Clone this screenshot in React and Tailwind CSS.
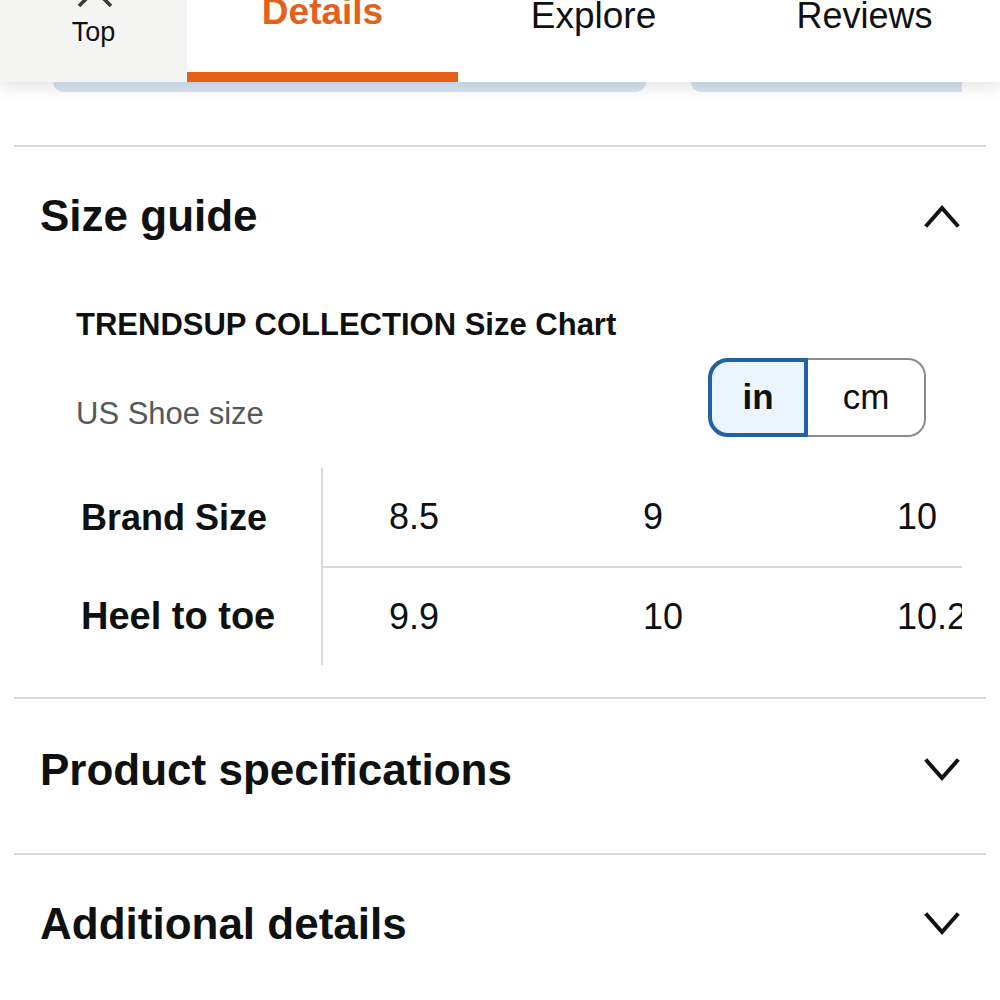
import React from "react";

const Chevron = ({ up }) => (
  <svg width="36" height="26" viewBox="0 0 36 26" fill="none">
    {up ? (
      <polyline points="3,22 18,5 33,22" stroke="#0f1111" strokeWidth="4" strokeLinecap="square" strokeLinejoin="miter" />
    ) : (
      <polyline points="3,4 18,21 33,4" stroke="#0f1111" strokeWidth="4" strokeLinecap="square" strokeLinejoin="miter" />
    )}
  </svg>
);

const Divider = () => <div className="h-[2px] bg-[#d9d9d9]" />;

const SectionHeader = ({ title, up }) => (
  <div className="flex items-center justify-between pl-[26px] pr-[26px]">
    <h2 className="text-[44px] leading-[44px] font-bold text-[#0f1111]">{title}</h2>
    <Chevron up={up} />
  </div>
);

export default function App() {
  const cols = [
    ["8.5", "9.9"],
    ["9", "10"],
    ["10", "10.2"],
  ];
  return (
    <div
      className="w-[1000px] h-[1000px] overflow-hidden bg-white text-[#0f1111]"
      style={{ fontFamily: '"Liberation Sans", Arial, sans-serif' }}
    >
      {/* Tab bar */}
      <div className="relative z-10 flex h-[82px] bg-white shadow-[0_6px_14px_rgba(0,0,0,0.10)]">
        <div className="flex w-[187px] flex-col items-center bg-[#f4f5f3]">
          <svg className="-mt-[14px] ml-[2px]" width="40" height="22" viewBox="0 0 40 22" fill="none">
            <polyline points="4,20 20,4 36,20" stroke="#3a3a3a" strokeWidth="3.6" />
          </svg>
          <span className="mt-[11px] text-[27px] leading-[27px] text-[#0f1111]">Top</span>
        </div>
        <div className="relative flex w-[271px] justify-center">
          <span className="-mt-[7px] text-[37px] leading-[37px] font-bold text-[#e4611b]">Details</span>
          <div className="absolute bottom-0 left-0 right-0 h-[10px] bg-[#e4611b]" />
        </div>
        <div className="flex w-[271px] justify-center">
          <span className="-mt-[2px] text-[37px] leading-[36px] text-[#0f1111]">Explore</span>
        </div>
        <div className="flex w-[271px] justify-center">
          <span className="-mt-[2px] text-[36px] leading-[36px] text-[#0f1111]">Reviews</span>
        </div>
      </div>

      {/* partially visible content under the bar */}
      <div className="flex h-[10px]">
        <div className="ml-[53px] w-[593px] rounded-b-[22px] bg-[#d7e5f1]" />
        <div className="ml-[45px] w-[271px] rounded-bl-[22px] bg-[#d7e5f1]" />
      </div>

      <div className="px-[14px] pt-[53px]">
        <Divider />

        {/* Size guide */}
        <div className="pt-[47px]">
          <SectionHeader title="Size guide" up />
        </div>

        <div className="pl-[62px] pr-[60px]">
          <div className="mt-[69px] text-[31px] leading-[36px] font-bold">TRENDSUP COLLECTION Size Chart</div>
          <div className="mt-[15px] flex items-start justify-between">
            <div className="mt-[38px] text-[31px] leading-[36px] text-[#565959]">US Shoe size</div>
            <div className="flex h-[79px]">
              <div className="flex w-[100px] items-center justify-center rounded-l-[20px] border-[4px] border-[#2162a5] bg-[#eaf5fd] text-[35px] font-bold">
                in
              </div>
              <div className="flex w-[118px] items-center justify-center rounded-r-[18px] border-2 border-l-0 border-[#8c8c8c] text-[35px]">
                cm
              </div>
            </div>
          </div>
        </div>

        {/* table */}
        <div className="mt-[31px] ml-[53px] mr-[24px] flex overflow-hidden">
          <div className="flex w-[256px] shrink-0 flex-col border-r-2 border-[#d9d9d9]">
            <div className="flex h-[100px] items-center pl-[14px] text-[36px] font-bold">Brand Size</div>
            <div className="flex h-[97px] items-center pl-[14px] text-[38px] font-bold">Heel to toe</div>
          </div>
          <div className="flex flex-1 flex-col">
            <div className="flex h-[100px] border-b-2 border-[#d9d9d9]">
              {cols.map((c, i) => (
                <div key={i} className="flex w-[254px] shrink-0 items-center pl-[66px] text-[36px]">
                  {c[0]}
                </div>
              ))}
            </div>
            <div className="flex h-[97px]">
              {cols.map((c, i) => (
                <div key={i} className="flex w-[254px] shrink-0 items-center pl-[66px] text-[36px] whitespace-nowrap">
                  {c[1]}
                </div>
              ))}
            </div>
          </div>
        </div>

        <div className="mt-[32px]">
          <Divider />
        </div>

        <div className="h-[154px] pt-[49px]">
          <SectionHeader title="Product specifications" />
        </div>
        <Divider />
        <div className="pt-[47px]">
          <SectionHeader title="Additional details" />
        </div>
      </div>
    </div>
  );
}
